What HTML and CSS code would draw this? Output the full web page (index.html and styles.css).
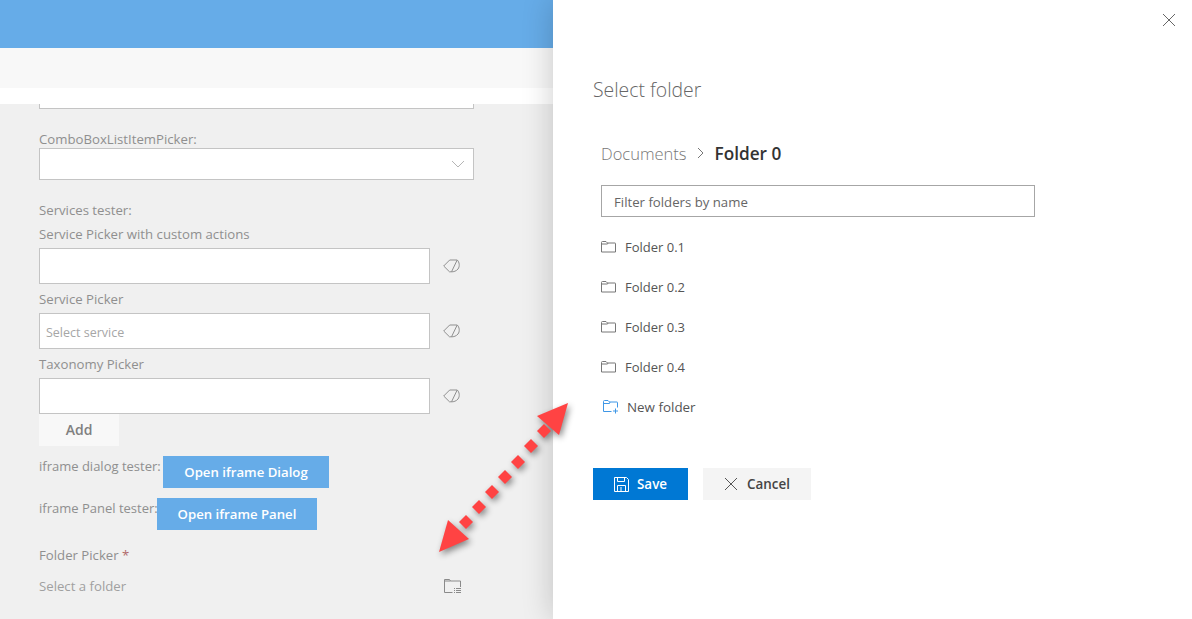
FILE: index.html
```html
<!DOCTYPE html>
<html lang="en">
<head>
    <meta charset="UTF-8">
    <title>Select folder</title>
    <link rel="stylesheet" href="styles.css">
</head>
<body>

<div class="page">
    <div class="left">
        <div class="suite-bar"></div>
        <div class="command-bar"></div>
        <div class="white-strip"></div>
        <div class="form">
            <div class="cut-input"></div>

            <label class="lbl combo-lbl">ComboBoxListItemPicker:</label>
            <div class="combo">
                <svg width="14" height="8" viewBox="0 0 14 8"><path d="M1 1l6 6 6-6" fill="none" stroke="#b5b5b5"/></svg>
            </div>

            <label class="lbl services-lbl">Services tester:</label>
            <label class="lbl picker-lbl">Service Picker with custom actions</label>
            <div class="picker-row">
                <div class="picker-box"></div>
                <svg class="tag" width="17" height="14" viewBox="0 0 17 14"><path d="M.7 7l6-6h7.500L8.500 12.800H6.500zM14.200 1c2.300 2 2.800 6.500.8 9-1.500 2-4.500 3-6.500 2.800" fill="none" stroke="#8f8f8f"/></svg>
            </div>
            <label class="lbl picker-lbl">Service Picker</label>
            <div class="picker-row">
                <div class="picker-box placeholder">Select service</div>
                <svg class="tag" width="17" height="14" viewBox="0 0 17 14"><path d="M.7 7l6-6h7.500L8.500 12.800H6.500zM14.200 1c2.300 2 2.800 6.500.8 9-1.500 2-4.500 3-6.500 2.800" fill="none" stroke="#8f8f8f"/></svg>
            </div>
            <label class="lbl picker-lbl">Taxonomy Picker</label>
            <div class="picker-row">
                <div class="picker-box"></div>
                <svg class="tag" width="17" height="14" viewBox="0 0 17 14"><path d="M.7 7l6-6h7.500L8.500 12.800H6.500zM14.200 1c2.300 2 2.800 6.500.8 9-1.500 2-4.500 3-6.500 2.800" fill="none" stroke="#8f8f8f"/></svg>
            </div>
            <button class="add-btn">Add</button>

            <div class="tester dialog-tester">
                <span class="lbl">iframe dialog tester:</span>
                <button class="blue-btn dialog-btn">Open iframe Dialog</button>
            </div>
            <div class="tester panel-tester">
                <span class="lbl">iframe Panel tester:</span>
                <button class="blue-btn panel-btn">Open iframe Panel</button>
            </div>

            <label class="lbl folder-lbl">Folder Picker <span class="req">*</span></label>
            <div class="folder-row">
                <span class="lbl select-folder">Select a folder</span>
                <svg class="folder-list" width="17" height="15" viewBox="0 0 17 15"><path d="M.5 13.500V.5h5l1 1.500h10v6M.5 2h6M.5 13.500h8" fill="none" stroke="#8a8a8a"/><path d="M10 9.500h1M10 11.500h1M10 13.500h1M12 9.500h5M12 11.500h5M12 13.500h5" stroke="#8a8a8a"/></svg>
            </div>
        </div>
    </div>

    <div class="panel">
        <div class="panel-top">
            <svg width="14" height="14" viewBox="0 0 14 14"><path d="M1 1l12 12M13 1L1 13" stroke="#666" fill="none"/></svg>
        </div>
        <h1 class="panel-title">Select folder</h1>
        <div class="panel-body">
            <div class="crumbs">
                <span class="crumb">Documents</span>
                <svg class="crumb-sep" width="10" height="14" viewBox="0 0 10 14"><path d="M2 2l5 5-5 5" fill="none" stroke="#777"/></svg>
                <span class="crumb-current">Folder 0</span>
            </div>
            <input class="filter" type="text" placeholder="Filter folders by name">
            <ul class="folders">
                <li><svg width="15" height="12" viewBox="0 0 15 12"><path d="M.5 11V1.500a1 1 0 0 1 1-1h3.500l1.500 1.500h7.500a.5.500 0 0 1 .5.500V11zM.5 3h6L7 2" fill="none" stroke="#777"/></svg>Folder 0.1</li>
                <li><svg width="15" height="12" viewBox="0 0 15 12"><path d="M.5 11V1.500a1 1 0 0 1 1-1h3.500l1.500 1.500h7.500a.5.500 0 0 1 .5.500V11zM.5 3h6L7 2" fill="none" stroke="#777"/></svg>Folder 0.2</li>
                <li><svg width="15" height="12" viewBox="0 0 15 12"><path d="M.5 11V1.500a1 1 0 0 1 1-1h3.500l1.500 1.500h7.500a.5.500 0 0 1 .5.500V11zM.5 3h6L7 2" fill="none" stroke="#777"/></svg>Folder 0.3</li>
                <li><svg width="15" height="12" viewBox="0 0 15 12"><path d="M.5 11V1.500a1 1 0 0 1 1-1h3.500l1.500 1.500h7.500a.5.500 0 0 1 .5.500V11zM.5 3h6L7 2" fill="none" stroke="#777"/></svg>Folder 0.4</li>
                <li class="new-folder"><svg width="16" height="14" viewBox="0 0 16 14"><path d="M8.500 11.500H.5V1.500a1 1 0 0 1 1-1h3.500l1.500 1.500h7.500a.5.500 0 0 1 .5.500V7.500M.5 3.500h6L7 2M12.500 8.500v5M10 11H15" fill="none" stroke="#3f97e6"/></svg>New folder</li>
            </ul>
        </div>
        <div class="panel-actions">
            <button class="save-btn">
                <svg width="15" height="15" viewBox="0 0 15 15"><path d="M.5.500h12l2 2v12H.5zM3.500.5v4h7v-4M3.500 14.500v-6h8v6M7 10v4" fill="none" stroke="#fff"/></svg>
                Save
            </button>
            <button class="cancel-btn">
                <svg width="14" height="14" viewBox="0 0 14 14"><path d="M1 1l12 12M13 1L1 13" stroke="#555" fill="none"/></svg>
                Cancel
            </button>
        </div>
    </div>

    <svg class="arrow" width="1192" height="619" viewBox="0 0 1192 619">
        <g fill="#ff4343">
            <polygon points="439,552 448,520 469,539"/>
            <polygon points="568,403 537,416 559,435"/>
            <polygon points="466,515 473,522 466,529 459,522"/>
            <polygon points="479,500 486,507 479,514 472,507"/>
            <polygon points="492,485 499,492 492,499 485,492"/>
            <polygon points="505,470 512,477 505,484 498,477"/>
            <polygon points="518,455 525,462 518,469 511,462"/>
            <polygon points="531,439 538,446 531,453 524,446"/>
            <polygon points="544,424 551,431 544,438 537,431"/>
        </g>
    </svg>
</div>

</body>
</html>
```

FILE: styles.css
```css
* {
    box-sizing: border-box;
}

body {
    margin: 0;
    font-family: "Open Sans", Arial, sans-serif;
    font-size: 13px;
    background-color: #f0f0f0;
    overflow: hidden;
}

button {
    font-family: inherit;
    border: none;
    padding: 0;
}

.page {
    position: relative;
    display: flex;
    width: 1192px;
    height: 619px;
    overflow: hidden;
}

/* dimmed page behind the panel */
.left {
    width: 553px;
    flex: none;
    background-color: #f0f0f0;
}

.suite-bar {
    height: 48px;
    background-color: #66ace8;
}

.command-bar {
    height: 40px;
    background-color: #f8f8f8;
}

.white-strip {
    height: 16px;
    background-color: #fff;
}

.form {
    padding-left: 39px;
}

.lbl {
    display: block;
    color: #8f8f8f;
    font-size: 13.200px;
    line-height: 18px;
}

.cut-input {
    width: 435px;
    height: 5px;
    background-color: #fff;
    border: 1px solid #c4c4c4;
    border-top: none;
}

.combo-lbl {
    margin-top: 21px;
}

.combo {
    display: flex;
    align-items: center;
    justify-content: flex-end;
    width: 435px;
    height: 32px;
    padding-right: 8px;
    background-color: #fff;
    border: 1px solid #c4c4c4;
}

.services-lbl {
    margin-top: 21px;
}

.picker-lbl {
    margin-top: 6px;
    margin-bottom: 5px;
}

.picker-row {
    display: flex;
    align-items: center;
    height: 36px;
}

.picker-box {
    width: 391px;
    height: 36px;
    background-color: #fff;
    border: 1px solid #c4c4c4;
}

.placeholder {
    padding: 10px 6px 0;
    color: #a6a6a6;
    font-size: 12.500px;
    line-height: 18px;
}

.tag {
    margin-left: 13px;
}

.add-btn {
    display: block;
    width: 80px;
    height: 32px;
    padding-bottom: 2px;
    background-color: #f8f8f8;
    color: #808080;
    font-size: 14px;
    font-weight: 600;
}

.tester {
    display: flex;
    align-items: flex-start;
    margin-top: 10px;
}

.tester .lbl {
    padding-top: 1px;
    font-size: 13px;
    white-space: nowrap;
}

.dialog-tester .lbl {
    width: 124px;
}

.panel-tester .lbl {
    width: 118px;
}

.blue-btn {
    height: 32px;
    background-color: #66ace8;
    color: #fff;
    font-size: 13.200px;
    font-weight: 600;
}

.dialog-btn {
    width: 166px;
}

.panel-btn {
    width: 160px;
}

.folder-lbl {
    margin-top: 16px;
}

.req {
    color: #b06a6a;
}

.folder-row {
    display: flex;
    align-items: center;
    justify-content: space-between;
    width: 422px;
    margin-top: 13px;
}

.select-folder {
    color: #a0a0a0;
}

/* panel */
.panel {
    flex: 1;
    background-color: #fff;
    box-shadow: 0 0 30px rgba(0, 0, 0, 0.2);
    z-index: 1;
}

.panel-top {
    display: flex;
    justify-content: flex-end;
    height: 66px;
    padding: 13px 16px 0 0;
}

.panel-title {
    margin: 0;
    padding-left: 40px;
    color: #666;
    font-size: 19.400px;
    font-weight: 300;
    line-height: 48px;
}

.panel-body {
    padding: 0 0 0 48px;
}

.crumbs {
    display: flex;
    align-items: center;
    gap: 8px;
    height: 28px;
    margin-top: 25px;
    color: #777;
    font-size: 16.500px;
}

.crumb {
    font-weight: 300;
}

.crumb-sep {
    margin: 0 1px;
}

.crumb-current {
    color: #333;
    font-size: 17.200px;
    font-weight: 600;
}

.filter {
    display: block;
    width: 434px;
    height: 32px;
    margin-top: 18px;
    padding: 1px 12px 0;
    font-family: inherit;
    font-size: 13.200px;
    border: 1px solid #a6a6a6;
    border-radius: 0;
    outline: none;
}

.filter::placeholder {
    color: #666;
}

.folders {
    margin: 10px 0 0;
    padding: 0;
    list-style: none;
}

.folders li {
    display: flex;
    align-items: center;
    gap: 9px;
    height: 40px;
    color: #555;
}

.folders .new-folder {
    gap: 8px;
    padding-left: 2px;
    font-size: 13.400px;
}

.panel-actions {
    display: flex;
    gap: 15px;
    margin-top: 41px;
    padding-left: 40px;
}

.save-btn, .cancel-btn {
    display: flex;
    align-items: center;
    justify-content: center;
    gap: 8px;
    height: 32px;
    font-size: 13.400px;
    font-weight: 600;
}

.save-btn {
    width: 95px;
    background-color: #0078d4;
    color: #fff;
}

.cancel-btn {
    width: 108px;
    gap: 9px;
    background-color: #f4f4f4;
    color: #444;
}

/* callout drawn over the screenshot */
.arrow {
    position: absolute;
    top: 0;
    left: 0;
    z-index: 2;
    filter: drop-shadow(2px 3px 3px rgba(0, 0, 0, 0.45));
}
```
